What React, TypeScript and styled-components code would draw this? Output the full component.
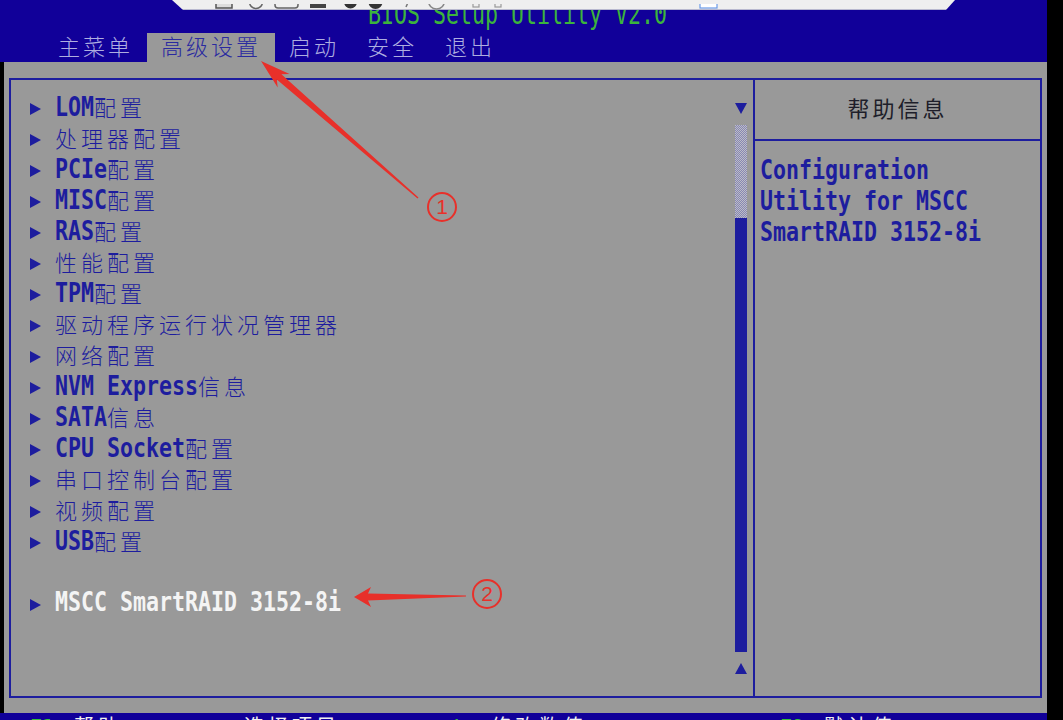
import React from "react";
import styled, { createGlobalStyle } from "styled-components";

const BLUE = "#110099";
const INK = "#1d1d9e";
const GRAY = "#999999";
const RED = "#e8302a";

const GlobalStyle = createGlobalStyle`
  html, body { margin: 0; padding: 0; background: #000; }
  body { width: 1063px; height: 720px; overflow: hidden; }
  * { box-sizing: border-box; }
`;

const Stage = styled.div`
  position: relative;
  width: 1063px;
  height: 720px;
  background: #000;
  overflow: hidden;
`;

const Screen = styled.div`
  width: 1047px;
  height: 720px;
  display: flex;
  flex-direction: column;
`;

const Header = styled.header`
  background: ${BLUE};
  height: 62px;
  flex: none;
  display: flex;
  flex-direction: column;
`;

const TitleRow = styled.div`
  height: 33px;
  display: flex;
  align-items: flex-end;
  padding-left: 368px;
  padding-bottom: 5px;
  overflow: hidden;
`;

const Title = styled.span`
  font-family: "DejaVu Sans Mono", monospace;
  font-size: 21.6px;
  line-height: 22px;
  color: #3cb43c;
  white-space: pre;
  display: inline-block;
  transform: scaleY(1.4);
  transform-origin: 50% 77%;
`;

const TabRow = styled.nav`
  height: 29px;
  display: flex;
  padding-left: 44px;
`;

const Tab = styled.div<{ $active?: boolean }>`
  padding: 0 14px 4px;
  display: flex;
  align-items: center;
  background: ${(p) => (p.$active ? GRAY : "transparent")};
  color: ${(p) => (p.$active ? "#2a2aa0" : "#aeaee0")};
  font-family: "Noto Sans CJK SC", sans-serif;
  font-weight: 300;
  font-size: 22px;
  letter-spacing: 3px;
  line-height: 25px;
`;

const Main = styled.main`
  flex: 1;
  min-height: 0;
  margin-left: 4px;
  background: ${GRAY};
  display: flex;
  flex-direction: column;
  padding: 16px 5px 15px;
`;

const Frame = styled.section`
  flex: 1;
  min-height: 0;
  border: 2px solid ${INK};
  display: flex;
`;

const MenuPane = styled.div`
  width: 744px;
  flex: none;
  border-right: 2px solid ${INK};
  display: flex;
`;

const MenuList = styled.ul`
  list-style: none;
  margin: 0;
  padding: 13px 0 0 19px;
  flex: 1;
`;

const Row = styled.li<{ $current?: boolean }>`
  height: 31px;
  display: flex;
  align-items: center;
  gap: 14px;
  color: ${(p) => (p.$current ? "#f4f4f4" : INK)};
`;

const Pointer = styled.span`
  width: 0;
  height: 0;
  border-left: 11px solid ${INK};
  border-top: 6px solid transparent;
  border-bottom: 6px solid transparent;
`;

const Label = styled.span`
  display: inline-block;
  white-space: pre;
  line-height: 22px;
`;

const Latin = styled.span`
  font-family: "DejaVu Sans Mono", monospace;
  font-weight: 700;
  font-size: 21.6px;
  line-height: 22px;
  white-space: pre;
  display: inline-block;
  transform: scaleY(1.25);
  transform-origin: 50% 77%;
`;

const Han = styled.span`
  font-family: "Noto Sans CJK SC", sans-serif;
  font-weight: 300;
  font-size: 22px;
  letter-spacing: 4px;
  line-height: 22px;
`;

const ScrollBar = styled.div`
  width: 13px;
  margin-right: 6px;
  padding: 23px 0 22px;
  display: flex;
  flex-direction: column;
  align-items: center;
`;

const ArrowDown = styled.span`
  width: 0;
  height: 0;
  border-top: 11px solid ${INK};
  border-left: 6px solid transparent;
  border-right: 6px solid transparent;
`;

const ArrowUp = styled.span`
  margin-top: 11px;
  width: 0;
  height: 0;
  border-bottom: 11px solid ${INK};
  border-left: 6px solid transparent;
  border-right: 6px solid transparent;
`;

const Track = styled.div`
  margin-top: 11px;
  width: 12px;
  flex: 1;
  display: flex;
  flex-direction: column;
  background: repeating-conic-gradient(#8686b4 0 25%, #bdbdc6 0 50%) 0 0 / 2px 2px;
`;

const Thumb = styled.div`
  margin-top: 93px;
  flex: 1;
  background: ${INK};
`;

const HelpPane = styled.aside`
  flex: 1;
  display: flex;
  flex-direction: column;
`;

const HelpHeader = styled.div`
  height: 61px;
  padding-bottom: 6px;
  border-bottom: 2px solid ${INK};
  display: flex;
  align-items: center;
  justify-content: center;
  color: #1e1e2a;
  font-family: "Noto Sans CJK SC", sans-serif;
  font-weight: 400;
  font-size: 22px;
  letter-spacing: 3px;
`;

const HelpBody = styled.div`
  padding: 15px 0 0 5px;
  color: ${INK};
`;

const HelpLine = styled.div`
  height: 31px;
  display: flex;
  align-items: center;
`;

const Footer = styled.footer`
  height: 7px;
  flex: none;
  background: ${BLUE};
  overflow: hidden;
  display: flex;
  padding: 2px 0 0 30px;
`;

const FooterItem = styled.div<{ $w: number }>`
  width: ${(p) => p.$w}px;
  flex: none;
  display: flex;
  gap: 20px;
  line-height: 22px;
  font-size: 20px;
`;

const Key = styled.span`
  color: #38c038;
  font-family: "DejaVu Sans Mono", monospace;
  font-weight: 700;
`;

const KeyLabel = styled.span`
  color: #f0f0f0;
  font-family: "Noto Sans CJK SC", sans-serif;
  letter-spacing: 4px;
`;

const BrowserBar = styled.div`
  position: absolute;
  left: 172px;
  top: 0;
  width: 783px;
  height: 10px;
  background: linear-gradient(to bottom, #efefef 0 9px, #b9b9cf 9px 10px);
  clip-path: polygon(0 0, 783px 0, 774px 10px, 11px 10px);
`;

const Overlay = styled.svg`
  position: absolute;
  left: 0;
  top: 0;
  pointer-events: none;
`;

const Badge = styled.span<{ $x: number; $y: number }>`
  position: absolute;
  left: ${(p) => p.$x - 15}px;
  top: ${(p) => p.$y - 15}px;
  width: 30px;
  height: 30px;
  border: 2px solid ${RED};
  border-radius: 50%;
  color: ${RED};
  font-family: "Liberation Sans", sans-serif;
  font-size: 21px;
  line-height: 26px;
  text-align: center;
`;

const HAN_RE = /([\u4e00-\u9fff]+)/;

function Mixed({ text }: { text: string }) {
  const parts = text.split(HAN_RE).filter(Boolean);
  return (
    <Label>
      {parts.map((p, i) =>
        /[\u4e00-\u9fff]/.test(p) ? <Han key={i}>{p}</Han> : <Latin key={i}>{p}</Latin>
      )}
    </Label>
  );
}

const items = [
  "LOM配置",
  "处理器配置",
  "PCIe配置",
  "MISC配置",
  "RAS配置",
  "性能配置",
  "TPM配置",
  "驱动程序运行状况管理器",
  "网络配置",
  "NVM Express信息",
  "SATA信息",
  "CPU Socket配置",
  "串口控制台配置",
  "视频配置",
  "USB配置",
];

const tabs = ["主菜单", "高级设置", "启动", "安全", "退出"];

export default function App() {
  return (
    <Stage>
      <GlobalStyle />
      <Screen>
        <Header>
          <TitleRow>
            <Title>BIOS Setup Utility V2.0</Title>
          </TitleRow>
          <TabRow>
            {tabs.map((t, i) => (
              <Tab key={t} $active={i === 1}>
                {t}
              </Tab>
            ))}
          </TabRow>
        </Header>
        <Main>
          <Frame>
            <MenuPane>
              <MenuList>
                {items.map((t) => (
                  <Row key={t}>
                    <Pointer />
                    <Mixed text={t} />
                  </Row>
                ))}
                <Row />
                <Row $current>
                  <Pointer />
                  <Mixed text="MSCC SmartRAID 3152-8i" />
                </Row>
              </MenuList>
              <ScrollBar>
                <ArrowDown />
                <Track>
                  <Thumb />
                </Track>
                <ArrowUp />
              </ScrollBar>
            </MenuPane>
            <HelpPane>
              <HelpHeader>帮助信息</HelpHeader>
              <HelpBody>
                <HelpLine>
                  <Latin>Configuration</Latin>
                </HelpLine>
                <HelpLine>
                  <Latin>Utility for MSCC</Latin>
                </HelpLine>
                <HelpLine>
                  <Latin>SmartRAID 3152-8i</Latin>
                </HelpLine>
              </HelpBody>
            </HelpPane>
          </Frame>
        </Main>
        <Footer>
          <FooterItem $w={170}>
            <Key>F1</Key>
            <KeyLabel>帮助</KeyLabel>
          </FooterItem>
          <FooterItem $w={235}>
            <Key>↑↓</Key>
            <KeyLabel>选择项目</KeyLabel>
          </FooterItem>
          <FooterItem $w={345}>
            <Key>+/-</Key>
            <KeyLabel>修改数值</KeyLabel>
          </FooterItem>
          <FooterItem $w={200}>
            <Key>F9</Key>
            <KeyLabel>默认值</KeyLabel>
          </FooterItem>
        </Footer>
      </Screen>

      <BrowserBar>
        <svg width="783" height="10" viewBox="0 0 783 10">
          <rect x="44" y="-8" width="16" height="12" fill="#dcdcdc" stroke="#555" strokeWidth="1.5" />
          <circle cx="84" cy="-2" r="6.5" fill="none" stroke="#666" strokeWidth="1.5" />
          <rect x="103" y="-8" width="23" height="12" rx="3" fill="none" stroke="#666" strokeWidth="1.5" />
          <rect x="138" y="-8" width="16" height="12" fill="#444" />
          <circle cx="178.5" cy="-2" r="6.5" fill="#333" />
          <circle cx="203.5" cy="-2" r="7" fill="#333" />
          <line x1="237" y1="-4" x2="234" y2="3" stroke="#777" strokeWidth="1.5" />
          <circle cx="264.5" cy="-3" r="8" fill="none" stroke="#888" strokeWidth="1.5" />
          <rect x="301" y="-6" width="6" height="9" fill="none" stroke="#999" strokeWidth="1.2" />
          <rect x="323" y="-6" width="6" height="9" fill="none" stroke="#999" strokeWidth="1.2" />
          <rect x="528" y="-6" width="17" height="10" fill="#fff" stroke="#6a9ae8" strokeWidth="1.2" />
        </svg>
      </BrowserBar>

      <Overlay width="1063" height="720" viewBox="0 0 1063 720">
        <polygon
          fill={RED}
          points="261,61 289.5,73.9 281.4,74.2 418.5,197.4 417.5,198.6 276.8,79.4 277.7,87.5"
        />
        <polygon
          fill={RED}
          points="354,597 371,587 368,593.5 466,595.5 466,596.5 368,600.5 371,607"
        />
      </Overlay>
      <Badge $x={442} $y={207}>1</Badge>
      <Badge $x={487} $y={594}>2</Badge>
    </Stage>
  );
}
